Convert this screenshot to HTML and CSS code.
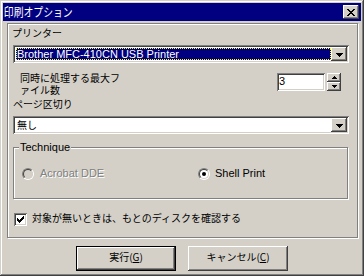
FILE: index.html
```html
<!DOCTYPE html>
<html lang="ja">
<head>
  <meta charset="UTF-8" />
  <title>印刷オプション</title>
  <link rel="stylesheet" href="styles.css">
</head>
<body>
  <div class="window">
    <div class="titlebar">
      <span class="title">印刷オプション</span>
      <div class="close-btn">
        <svg width="8" height="7" viewBox="0 0 8 7" shape-rendering="crispEdges">
          <path d="M0 0h2v1h-2zM6 0h2v1h-2zM1 1h2v1h-2zM5 1h2v1h-2zM2 2h4v1h-4zM3 3h2v1h-2zM2 4h4v1h-4zM1 5h2v1h-2zM5 5h2v1h-2zM0 6h2v1h-2zM6 6h2v1h-2z" fill="#000"/>
        </svg>
      </div>
    </div>

    <div class="panel">
      <div class="label">プリンター</div>
      <div class="combo">
        <div class="combo-text selected en">Brother MFC-410CN USB Printer</div>
        <div class="drop-btn">
          <svg width="7" height="4" viewBox="0 0 7 4" shape-rendering="crispEdges"><path d="M0 0h7v1h-7zM1 1h5v1h-5zM2 2h3v1h-3zM3 3h1v1h-1z" fill="#000"/></svg>
        </div>
      </div>

      <div class="spin-row">
        <div class="spin-label">同時に処理する最大フ<br>ァイル数</div>
        <div class="spin">
          <div class="spin-input en">3</div>
          <div class="spin-btns">
            <div class="spin-btn">
              <svg width="5" height="3" viewBox="0 0 5 3" shape-rendering="crispEdges"><path d="M2 0h1v1h-1zM1 1h3v1h-3zM0 2h5v1h-5z" fill="#000"/></svg>
            </div>
            <div class="spin-btn">
              <svg width="5" height="3" viewBox="0 0 5 3" shape-rendering="crispEdges"><path d="M0 0h5v1h-5zM1 1h3v1h-3zM2 2h1v1h-1z" fill="#000"/></svg>
            </div>
          </div>
        </div>
      </div>

      <div class="label label-page">ページ区切り</div>
      <div class="combo">
        <div class="combo-text">無し</div>
        <div class="drop-btn">
          <svg width="7" height="4" viewBox="0 0 7 4" shape-rendering="crispEdges"><path d="M0 0h7v1h-7zM1 1h5v1h-5zM2 2h3v1h-3zM3 3h1v1h-1z" fill="#000"/></svg>
        </div>
      </div>

      <fieldset class="group">
        <legend class="en">Technique</legend>
        <div class="radios">
          <div class="radio-item disabled">
            <span class="radio"></span>
            <span class="radio-text en">Acrobat DDE</span>
          </div>
          <div class="radio-item">
            <span class="radio checked"></span>
            <span class="radio-text en">Shell Print</span>
          </div>
        </div>
      </fieldset>

      <div class="check-row">
        <span class="checkbox">
          <svg width="7" height="7" viewBox="0 0 7 7" shape-rendering="crispEdges"><path d="M0 2h1v3h-1zM1 3h1v3h-1zM2 4h1v3h-1zM3 3h1v3h-1zM4 2h1v3h-1zM5 1h1v3h-1zM6 0h1v3h-1z" fill="#000"/></svg>
        </span>
        <span class="check-text">対象が無いときは、もとのディスクを確認する</span>
      </div>
    </div>

    <div class="buttons">
      <div class="btn btn-default">実行(<u>G</u>)</div>
      <div class="btn">キャンセル(<u>C</u>)</div>
    </div>
  </div>
</body>
</html>
```

FILE: styles.css
```css
body {
  margin: 0;
  background: #d4d0c8;
  font-family: "Noto Sans CJK JP", sans-serif;
  font-size: 10px;
  color: #000;
}
.en {
  font-family: "Liberation Sans", Arial, sans-serif;
  font-size: 11px;
}
.window {
  width: 364px;
  height: 276px;
  box-sizing: border-box;
  padding: 3px;
  background: #d4d0c8;
  box-shadow: inset -1px -1px #404040, inset 1px 1px #d4d0c8, inset -2px -2px #808080, inset 2px 2px #fff;
}
.titlebar {
  height: 18px;
  background: #000080;
  display: flex;
  align-items: center;
  justify-content: space-between;
}
.title {
  display: inline-block;
  color: #fff;
  font-size: 12px;
  line-height: 18px;
  padding-left: 1px;
  transform: scaleX(0.82);
  transform-origin: left center;
  white-space: nowrap;
}
.close-btn {
  width: 16px;
  height: 14px;
  box-sizing: border-box;
  margin-right: 2px;
  padding: 4px 0 0 4px;
  background: #d4d0c8;
  box-shadow: inset -1px -1px #404040, inset 1px 1px #fff, inset -2px -2px #808080;
}
.close-btn svg, .drop-btn svg, .spin-btn svg, .checkbox svg {
  display: block;
}

/* main group */
.panel {
  margin: 2px 0 0 4px;
  width: 351px;
  height: 215px;
  box-sizing: border-box;
  border: 1px solid #808080;
  box-shadow: inset 1px 1px #fff, 1px 1px #fff;
  padding: 3px 8px 0 5px;
}
.label {
  line-height: 12px;
  margin-left: -1px;
}
.label-page {
  margin-top: 2px;
  margin-left: 0;
}
.combo {
  margin-top: 6px;
  height: 18px;
  box-sizing: border-box;
  padding: 2px;
  display: flex;
  background: #fff;
  box-shadow: inset 1px 1px #808080, inset -1px -1px #fff, inset 2px 2px #404040, inset -2px -2px #d4d0c8;
}
.combo-text {
  flex: 1;
  margin: 1px 0 1px 1px;
  padding-left: 1px;
  line-height: 12px;
  white-space: nowrap;
}
.selected {
  background: #000080;
  color: #fff;
  outline: 1px dotted #ffff00;
  outline-offset: -1px;
}
.drop-btn {
  width: 16px;
  height: 14px;
  box-sizing: border-box;
  display: flex;
  align-items: center;
  justify-content: center;
  padding-top: 1px;
  background: #d4d0c8;
  box-shadow: inset -1px -1px #404040, inset 1px 1px #fff, inset -2px -2px #808080;
}

.spin-row {
  display: flex;
  justify-content: space-between;
  align-items: flex-start;
  margin-top: 9px;
}
.spin-label {
  margin-left: 7px;
  line-height: 12px;
}
.spin {
  display: flex;
  gap: 2px;
  margin-top: 1px;
  margin-right: 8px;
}
.spin-input {
  width: 48px;
  height: 18px;
  box-sizing: border-box;
  padding: 2px 2px 0 2px;
  line-height: 12px;
  background: #fff;
  box-shadow: inset 1px 1px #808080, inset -1px -1px #fff, inset 2px 2px #404040, inset -2px -2px #d4d0c8;
}
.spin-btn {
  width: 14px;
  height: 9px;
  box-sizing: border-box;
  display: flex;
  align-items: center;
  justify-content: center;
  background: #d4d0c8;
  box-shadow: inset -1px -1px #404040, inset 1px 1px #fff, inset -2px -2px #808080;
}

/* Technique */
.group {
  margin: 7px 1px 0 0;
  padding: 0 0 18px 0;
  border: 1px solid #808080;
  box-shadow: inset 1px 1px #fff, 1px 1px #fff;
  min-width: 0;
}
.group legend {
  margin-left: 5px;
  padding: 0 1px;
  line-height: 13px;
  background: #d4d0c8;
}
.radios {
  display: grid;
  grid-template-columns: 176px 1fr;
  margin-top: 14px;
  padding-left: 8px;
}
.radio-item {
  display: flex;
  align-items: flex-start;
  gap: 6px;
}
.radio-item:last-child {
  gap: 5px;
}
.radio-text {
  line-height: 12px;
  margin-top: -1px;
}
.disabled .radio-text {
  color: #808080;
  text-shadow: 1px 1px #fff;
}
.radio {
  position: relative;
  width: 12px;
  height: 12px;
  box-sizing: border-box;
  border-radius: 50%;
  border: 1px solid;
  border-color: #808080 #fff #fff #808080;
  transform: rotate(0deg);
}
.radio::before {
  content: "";
  display: block;
  width: 10px;
  height: 10px;
  box-sizing: border-box;
  border-radius: 50%;
  border: 1px solid;
  border-color: #404040 #d4d0c8 #d4d0c8 #404040;
  background: #fff;
}
.disabled .radio::before {
  background: #d4d0c8;
}
.radio.checked::after {
  content: "";
  position: absolute;
  left: 3px;
  top: 3px;
  width: 4px;
  height: 4px;
  border-radius: 50%;
  background: #000;
}

.check-row {
  display: flex;
  align-items: flex-start;
  gap: 5px;
  margin-top: 14px;
  margin-left: 1px;
}
.checkbox {
  width: 13px;
  height: 13px;
  box-sizing: border-box;
  padding: 3px;
  background: #fff;
  box-shadow: inset 1px 1px #808080, inset -1px -1px #fff, inset 2px 2px #404040, inset -2px -2px #d4d0c8;
}
.check-text {
  line-height: 12px;
  margin-top: -1px;
}

/* buttons */
.buttons {
  display: flex;
  justify-content: center;
  gap: 12px;
  margin-top: 8px;
}
.btn {
  width: 100px;
  height: 25px;
  box-sizing: border-box;
  display: flex;
  align-items: center;
  justify-content: center;
  padding-bottom: 4px;
  line-height: 12px;
  box-shadow: inset -1px -1px #404040, inset 1px 1px #fff, inset -2px -2px #808080;
}
.btn-default {
  box-shadow: inset 0 0 0 1px #000, inset -2px -2px #404040, inset 2px 2px #fff, inset -3px -3px #808080;
}
```
